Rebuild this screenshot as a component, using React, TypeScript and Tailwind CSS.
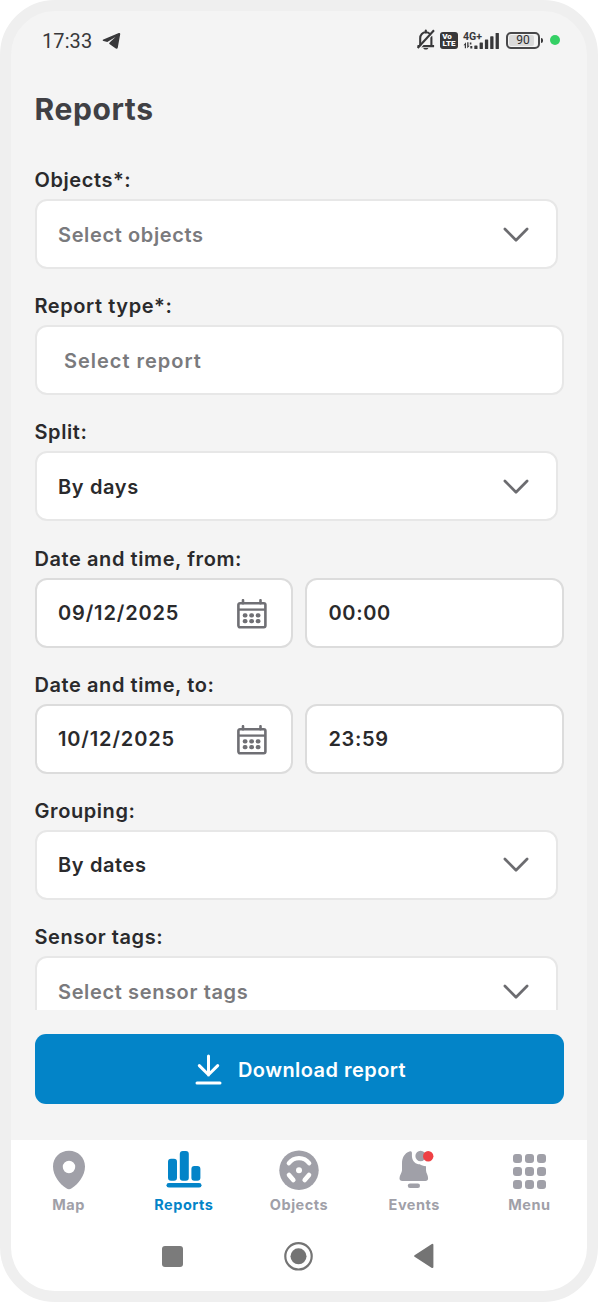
import type { ReactNode } from 'react';
import clsx from 'clsx';

function TelegramIcon() {
  return (
    <svg width="19" height="17" viewBox="0 0 19 17" fill="#38383a">
      <path d="M16.800 1.100 1.400 7.400c-1 .4-.9 1.200.1 1.500l3.800 1.200L13.500 5 7.600 10.600l-.5 1.100 6.300 4.600c1.100.8 2.200.4 2.400-.9L18.200 2.300c.2-1-.5-1.600-1.400-1.200Z" />
    </svg>
  );
}

function MutedBellIcon() {
  return (
    <svg width="20" height="22" viewBox="0 0 20 22" fill="none" stroke="#38383a" strokeWidth="2.100">
      <path d="M1.500 17.100h16.600M4.200 17V9.300C4.200 5.700 6.600 3.300 9.800 3.300s5.600 2.400 5.600 6V17" />
      <path d="M9.800 3.400V1.600" strokeLinecap="round" />
      <path d="M3.300 19.500 19.300 2" stroke="#f4f4f4" strokeWidth="1.500" />
      <path d="M1.700 19 18 1.200" />
      <path d="M7.300 19.100h5c-.5 2-4.500 2-5 0Z" fill="#38383a" stroke="none" />
    </svg>
  );
}

function SignalIcon() {
  return (
    <svg className="overflow-visible" width="37" height="19" viewBox="0 0 37 19" fill="#38383a">
      <text x="0" y="8.500" fontFamily="Roboto" fontSize="10" fontWeight="700" textLength="19" lengthAdjust="spacingAndGlyphs">4G+</text>
      <path d="M.5 14.200 3 11.300v6H1.800v-3.100ZM4.200 11.300h1.300v3.500h1.200L4.200 17.300Z" />
      <rect x="6.800" y="11.500" width="1.600" height="2" />
      <rect x="7.300" y="15" width="2" height="2.500" />
      <rect x="11.300" y="14.400" width="3.200" height="3.600" rx=".6" />
      <rect x="16.600" y="11.500" width="3.300" height="6.500" rx=".6" />
      <rect x="21.900" y="8.500" width="3.300" height="9.500" rx=".6" />
      <rect x="27.200" y="5.300" width="3.300" height="12.700" rx=".6" />
      <rect x="32.600" y="2" width="3.300" height="16" rx=".6" />
    </svg>
  );
}

function ChevronIcon() {
  return (
    <svg className="mt-px" width="26" height="16" viewBox="0 0 26 16" fill="none" stroke="#6c6c70" strokeWidth="2.700" strokeLinecap="round" strokeLinejoin="round">
      <path d="M1.900 2 13 13.200 24.100 2" />
    </svg>
  );
}

function CalendarIcon() {
  return (
    <svg className="mt-[2px]" width="30" height="30" viewBox="0 0 30 30" fill="#6f6f74">
      <path d="M6 1.200v3M23.500 1.200v3" stroke="#6f6f74" strokeWidth="2.600" strokeLinecap="round" />
      <rect x="1.400" y="4.200" width="27" height="24" rx="1.600" fill="none" stroke="#6f6f74" strokeWidth="2.600" />
      <path d="M1 10.600h28" stroke="#6f6f74" strokeWidth="2.300" />
      {[8, 14.500, 21].map(x => (
        <g key={x}>
          <rect x={x - 2.300} y="14.300" width="4.800" height="4.200" rx="2" />
          <rect x={x - 2.300} y="20.100" width="4.800" height="4.200" rx="2" />
        </g>
      ))}
    </svg>
  );
}

function DownloadIcon() {
  return (
    <svg width="27" height="31" viewBox="0 0 27 31" fill="none" stroke="#fff" strokeWidth="3" strokeLinecap="round" strokeLinejoin="round">
      <path d="M13.500 2v19M4.300 11.600l9.200 9.200 9.200-9.200M2 29h23" />
    </svg>
  );
}

function MapIcon() {
  return (
    <svg width="34" height="40" viewBox="0 0 34 40">
      <path fillRule="evenodd" d="M17 .8C8 .8 1 7.600 1 16.400c0 9.300 6.700 17.400 13.300 21.900 1.900 1.300 3.500 1.300 5.400 0C26.300 33.800 33 25.700 33 16.400 33 7.600 26 .8 17 .8Zm0 10a6.200 6.200 0 1 1 0 12.400 6.200 6.200 0 0 1 0-12.400Z" fill="currentColor" />
    </svg>
  );
}

function ReportsIcon() {
  return (
    <svg width="36" height="40" viewBox="0 0 36 40" fill="currentColor">
      <rect x="2" y="8.800" width="9" height="22" rx="3" />
      <rect x="13.800" y="1" width="9" height="29.800" rx="3" />
      <rect x="25.400" y="16" width="9" height="14.800" rx="3" />
      <rect x=".5" y="33" width="35" height="4.600" rx="2.300" />
    </svg>
  );
}

function WheelIcon() {
  return (
    <svg width="40" height="40" viewBox="0 0 40 40" fill="none">
      <circle cx="20" cy="20.300" r="19.700" fill="currentColor" />
      <g stroke="#fff" strokeLinecap="round">
        <path d="M9.800 13.300c5-6.900 15.400-6.900 20.400 0" strokeWidth="4.300" />
        <path d="m10 25 4.300 5M30 25l-4.300 5" strokeWidth="4.600" />
      </g>
      <circle cx="20" cy="20.300" r="3" fill="#fff" />
    </svg>
  );
}

function EventsIcon() {
  return (
    <svg className="ml-[3px]" width="36" height="40" viewBox="0 0 36 40" fill="currentColor">
      <path d="M11.500 1.500C6.300 3.300 4 8 4 13.500v6.800c0 2.300-2.500 4.700-2.500 8 0 1.700 1 2.700 2.700 2.700h23.200c1.700 0 2.700-1 2.700-2.700 0-3-2.100-5.500-2.100-8v-4c-2.700-.2-4.600-.9-6.300-2-3.800-.1-7.300-3.100-7.700-7.400-.2-1.800.1-3.300-.2-4.600-.3-1-1.200-1.200-2.300-.8Z" />
      <rect x="9.800" y="33.500" width="12.200" height="4.500" rx="2.200" />
      <circle cx="22.600" cy="6" r="5.200" />
      <circle cx="30.200" cy="6.300" r="5.200" fill="#ef4044" />
    </svg>
  );
}

function MenuIcon() {
  return (
    <div className="grid grid-cols-3 gap-[3px] pt-[4px]">
      {Array.from({ length: 9 }, (_, i) => (
        <span key={i} className="h-[9px] w-[9px] rounded-[3px] bg-current" />
      ))}
    </div>
  );
}

function StatusBar() {
  return (
    <header className="flex h-[58px] items-center justify-between pr-[27px] pl-[31px]">
      <div className="flex items-center gap-[10px]">
        <span className="pt-px font-[Roboto,sans-serif] text-[20px] leading-6 tracking-[0.100px] text-[#38383a]">17:33</span>
        <TelegramIcon />
      </div>
      <div className="flex items-center">
        <MutedBellIcon />
        <div className="ml-[4px] flex h-[17px] w-[18px] flex-col items-center justify-center rounded-[3px] bg-[#38383a] font-[Roboto,sans-serif] text-[8px] leading-[7px] font-black text-white">
          <span className="-ml-[4px]">Vo</span>
          <span>LTE</span>
        </div>
        <div className="ml-[5px]"><SignalIcon /></div>
        <div className="ml-[6px] flex h-[17px] w-[34px] items-center rounded-[5px] border-2 border-[#48484a] p-px">
          <div className="flex h-full w-[25px] items-center justify-center rounded-[2px] bg-[#dadada] pl-[3px] font-[Roboto,sans-serif] text-[12px] leading-3 text-[#2e2e30]">90</div>
        </div>
        <span className="ml-px h-[5px] w-[2px] rounded-r bg-[#38383a]" />
        <span className="ml-[7px] h-[10px] w-[10px] rounded-full bg-[#34d065]" />
      </div>
    </header>
  );
}

function Field({ label, children }: { label: string; children: ReactNode }) {
  return (
    <div className="h-[126.200px] shrink-0">
      <div className="mb-[5px] h-7 text-[20px] leading-7 font-semibold tracking-[0.580px] text-[#2a2a2c]">{label}</div>
      {children}
    </div>
  );
}

function SelectBox({ value, placeholder }: { value?: string; placeholder?: string }) {
  return (
    <div className="flex h-[70px] w-[523px] items-center justify-between rounded-[12px] border-2 border-[#e7e7e7] bg-white pr-[27px] pl-[21.500px]">
      <span className={clsx('pt-px text-[20px] font-semibold tracking-[0.630px]', value ? 'text-[#2a2a2c]' : 'text-[#7a7a7d]')}>
        {value ?? placeholder}
      </span>
      <ChevronIcon />
    </div>
  );
}

function DateTimeRow({ date, time }: { date: string; time: string }) {
  return (
    <div className="grid grid-cols-2 gap-[12px] text-[20px] font-semibold text-[#2a2a2c]">
      <div className="flex h-[70px] items-center justify-between rounded-[12px] border-2 border-[#dcdcdc] bg-white pr-[24px] pl-[21.500px] tracking-[0.850px]">
        {date}
        <CalendarIcon />
      </div>
      <div className="flex h-[70px] items-center rounded-[12px] border-2 border-[#dcdcdc] bg-white pl-[21.500px] tracking-[0.650px]">{time}</div>
    </div>
  );
}

const tabs = [
  { label: 'Map', icon: <MapIcon /> },
  { label: 'Reports', icon: <ReportsIcon />, active: true },
  { label: 'Objects', icon: <WheelIcon /> },
  { label: 'Events', icon: <EventsIcon /> },
  { label: 'Menu', icon: <MenuIcon /> },
];

export default function App() {
  return (
    <div className="h-[1302px] w-[598px] bg-white font-[Inter,sans-serif]">
      <div className="flex h-full flex-col overflow-hidden rounded-[55px] border-[11px] border-[#efefef] bg-[#f4f4f4]">
        <StatusBar />

        <main className="h-[941px] shrink-0 overflow-hidden px-[23.500px]">
          <h1 className="mt-[20px] mb-[37px] h-10 text-[30px] leading-10 font-bold tracking-[0.600px] text-[#404044]">Reports</h1>
          <Field label="Objects*:">
            <SelectBox placeholder="Select objects" />
          </Field>
          <Field label="Report type*:">
            <div className="flex h-[70px] items-center rounded-[12px] border-2 border-[#e7e7e7] bg-white pt-px pl-[27.500px] text-[20px] font-semibold tracking-[0.980px] text-[#7a7a7d]">
              Select report
            </div>
          </Field>
          <Field label="Split:">
            <SelectBox value="By days" />
          </Field>
          <Field label="Date and time, from:">
            <DateTimeRow date="09/12/2025" time="00:00" />
          </Field>
          <Field label="Date and time, to:">
            <DateTimeRow date="10/12/2025" time="23:59" />
          </Field>
          <Field label="Grouping:">
            <SelectBox value="By dates" />
          </Field>
          <Field label="Sensor tags:">
            <SelectBox placeholder="Select sensor tags" />
          </Field>
        </main>

        <button className="mx-[23.500px] mt-[24px] flex h-[70px] shrink-0 items-center justify-center gap-[16px] rounded-[11px] bg-[#0384c8] pt-px pl-[3px] text-[20px] font-semibold tracking-[0.450px] text-white">
          <DownloadIcon />
          Download report
        </button>

        <footer className="mt-auto h-[151px] shrink-0 bg-white">
          <nav className="grid grid-cols-5 pt-[10px]">
            {tabs.map(tab => (
              <div
                key={tab.label}
                className={clsx('flex flex-col items-center', tab.active ? 'text-[#0384c8]' : 'text-[#a0a0a8]')}
              >
                <div className="flex h-10 justify-center">{tab.icon}</div>
                <span className="mt-[5px] text-[14.500px] leading-5 font-bold tracking-[0.500px]">{tab.label}</span>
              </div>
            ))}
          </nav>

          {/* System navigation */}
          <div className="mt-[26px] flex h-[30px] items-center justify-center pr-[2px]">
            <span className="h-[21px] w-[21px] rounded-[3px] bg-[#7b7b7b]" />
            <svg className="ml-[100px]" width="30" height="30" viewBox="0 0 30 30">
              <circle cx="15.500" cy="15.300" r="13.200" fill="none" stroke="#747474" strokeWidth="2.200" />
              <circle cx="15.500" cy="15.300" r="8" fill="#747474" />
            </svg>
            <svg className="ml-[100px]" width="21" height="26" viewBox="0 0 21 26">
              <path d="M19.400 1.900v22.200L2.100 13Z" fill="#747474" stroke="#747474" strokeWidth="2" strokeLinejoin="round" />
            </svg>
          </div>
        </footer>
      </div>
    </div>
  );
}
